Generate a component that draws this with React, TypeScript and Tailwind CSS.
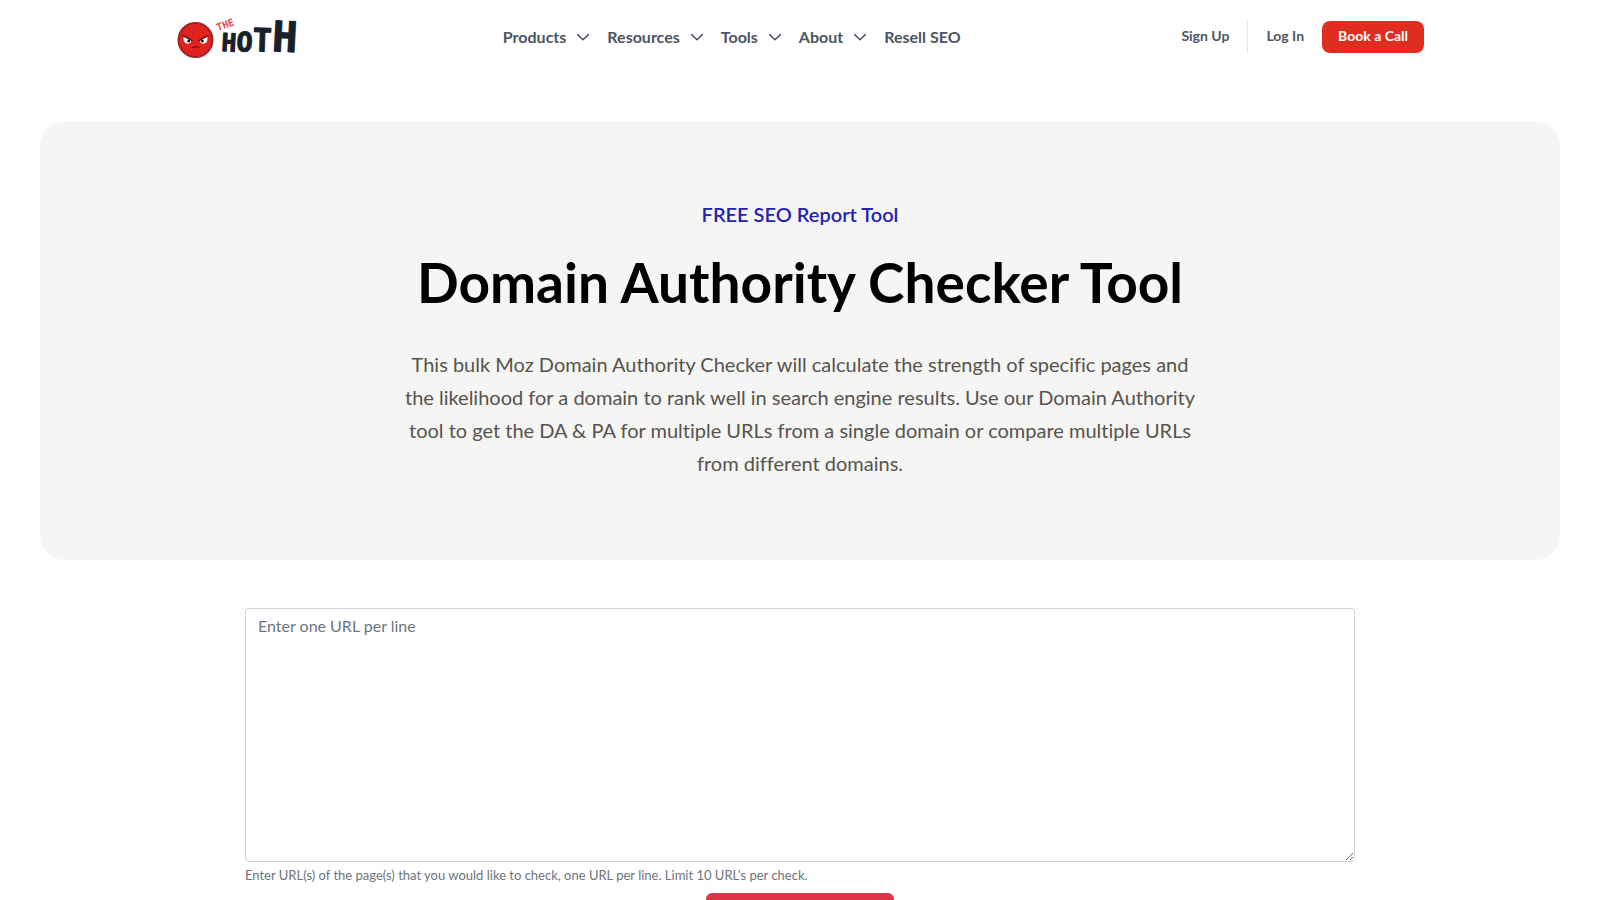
import { useState } from "react";

const menus = ["Products", "Resources", "Tools", "About"];

function Chevron() {
  return (
    <svg className="size-5" viewBox="0 0 20 20" fill="none" stroke="currentColor" strokeWidth="1.5" strokeLinecap="round" strokeLinejoin="round" aria-hidden="true">
      <path d="M4.7 7.6 L10 12.8 L15.3 7.6" />
    </svg>
  );
}

function Logo() {
  return (
    <svg className="h-[64px] w-[126px]" viewBox="0 -10 126 64" role="img" aria-label="The Hoth">
      <circle cx="19.5" cy="25" r="18" fill="#a32024" />
      <circle cx="19.5" cy="25" r="16" fill="#e0231f" />
      <path d="M7.6 21.6 Q7 29 12 28.8 Q15.4 28.4 15.2 25.6 Z" fill="#fff" />
      <path d="M31.4 21.6 Q32 29 27 28.8 Q23.6 28.4 23.8 25.6 Z" fill="#fff" />
      <path d="M7 20.6 L15.8 25.4 M32 20.6 L23.2 25.4" stroke="#5a1417" strokeWidth="1.5" strokeLinecap="round" />
      <circle cx="12.7" cy="26" r="1.5" fill="#3a1114" />
      <circle cx="26.3" cy="26" r="1.5" fill="#3a1114" />
      <path d="M16.3 32.4 Q19.5 31.2 22.7 32.4" fill="none" stroke="#8a1518" strokeWidth="1.4" strokeLinecap="round" />
      <g fontFamily="'DejaVu Sans Mono', monospace" fontWeight="700">
        <text x="42" y="16" fontSize="10" fill="#e2484b" transform="rotate(-20 42 16)">THE</text>
        <text x="45" y="36" fill="#17202b" stroke="#17202b" strokeWidth="1" strokeLinejoin="round">
          <tspan fontSize="25" rotate="3">H</tspan>
          <tspan fontSize="27" rotate="3">O</tspan>
          <tspan fontSize="32" rotate="2">T</tspan>
          <tspan fontSize="42" rotate="3">H</tspan>
        </text>
      </g>
    </svg>
  );
}

export default function App() {
  const [urls, setUrls] = useState("");
  return (
    <div className="h-screen overflow-hidden bg-white font-['Lato','Liberation_Sans',sans-serif] text-[#4b5563] [font-variant-ligatures:no-common-ligatures]">
      <header className="mx-auto flex h-[74px] max-w-7xl items-center justify-between px-4">
        <a href="#home"><Logo /></a>
        <nav className="mr-5 flex items-center gap-3.5 text-base font-bold" aria-label="Main">
          {menus.map((name) => (
            <button key={name} type="button" className="flex items-center gap-[7px]">
              {name}
              <Chevron />
            </button>
          ))}
          <a href="#resell">Resell SEO</a>
        </nav>
        <div className="flex items-center text-sm font-bold">
          <a href="#signup" className="flex h-8 items-center pr-[18px] pb-0.5">Sign Up</a>
          <a href="#login" className="flex h-8 items-center border-l border-gray-200 px-[18px] pb-0.5">Log In</a>
          <a href="#call" className="flex h-8 items-center rounded-lg bg-[#e12d1f] px-4 pb-0.5 text-white">Book a Call</a>
        </div>
      </header>

      <main>
        <section className="mx-10 mt-12 rounded-3xl bg-[#f5f5f3] px-6 py-20 text-center">
          <p className="text-xl leading-6 font-semibold text-[#2222b5]">FREE SEO Report Tool</p>
          <h1 className="mt-6 text-[55px] leading-[64px] font-bold text-black">Domain Authority Checker Tool</h1>
          <p className="mx-auto mt-[34px] max-w-[800px] text-xl leading-[33px] text-[#57534e]">
            This bulk Moz Domain Authority Checker will calculate the strength of specific pages and the likelihood for a domain to rank well in search engine results. Use our Domain Authority tool to get the DA &amp; PA for multiple URLs from a single domain or compare multiple URLs from different domains.
          </p>
        </section>

        <form className="mx-auto mt-12 flex max-w-[1110px] flex-col" onSubmit={(e) => e.preventDefault()}>
          <textarea
            aria-label="URLs to check"
            aria-describedby="url-help"
            placeholder="Enter one URL per line"
            value={urls}
            onChange={(e) => setUrls(e.target.value)}
            className="h-[254px] w-full resize-y rounded border border-[#ced4da] px-3 py-[5px] text-base text-[#495057] placeholder:text-[#6c757d]"
          />
          <small id="url-help" className="mt-[3px] text-[13px] leading-5 text-[#6c757d]">
            Enter URL(s) of the page(s) that you would like to check, one URL per line. Limit 10 URL's per check.
          </small>
          <button type="submit" aria-label="Check authority" className="mt-2 h-12 w-[188px] self-center rounded-md bg-[#dc3545]" />
        </form>
      </main>
    </div>
  );
}
